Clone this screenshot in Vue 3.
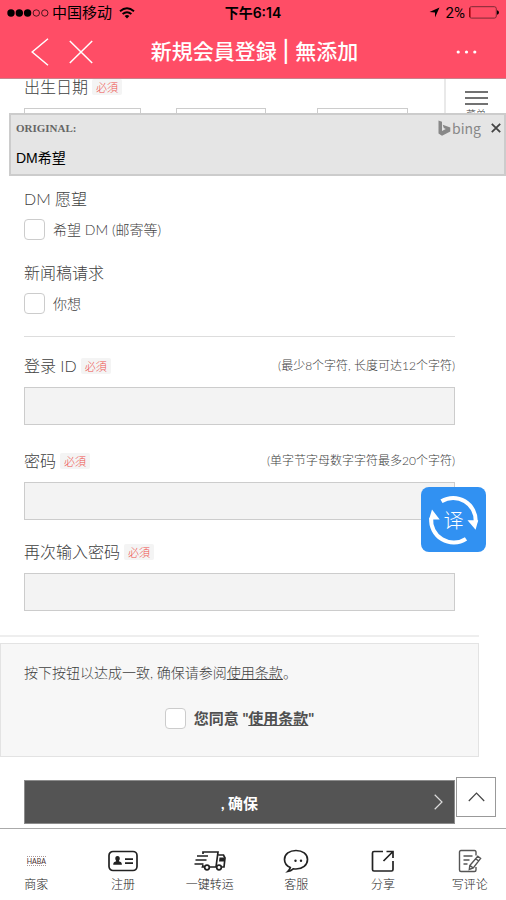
<script setup>
import { ref } from 'vue'

const fields = [
  { id: 'login', label: '登录 ID', hint: '(最少8个字符, 长度可达12个字符)', type: 'text' },
  { id: 'password', label: '密码', hint: '(单字节字母数字字符最多20个字符)', type: 'password' },
  { id: 'confirm', label: '再次输入密码', hint: '', type: 'password' },
]
const tabs = [
  { id: 'shop', label: '商家' },
  { id: 'register', label: '注册' },
  { id: 'ship', label: '一键转运' },
  { id: 'service', label: '客服' },
  { id: 'share', label: '分享' },
  { id: 'review', label: '写评论' },
]
const popupOpen = ref(true)
</script>

<template>
  <div class="page">
    <header class="top">
      <div class="status">
        <div class="carrier">
          <svg width="42" height="10" viewBox="0 0 42 10">
            <circle cx="4" cy="5" r="3.7" /><circle cx="12.3" cy="5" r="3.7" /><circle cx="20.6" cy="5" r="3.7" />
            <g fill="none" stroke="#000" stroke-width=".7"><circle cx="29.3" cy="5" r="3.2" /><circle cx="37.8" cy="5" r="3.2" /></g>
          </svg>
          <span>中国移动</span>
          <svg class="wifi" width="16" height="12" viewBox="0 0 16 12">
            <g fill="none" stroke="#000" stroke-width="1.9"><path d="M1 4.3Q8-1.6 15 4.3" /><path d="M3.6 7.1Q8 3.4 12.4 7.1" /></g>
            <path d="M5.6 9Q8 7.2 10.4 9L8 11.5Z" />
          </svg>
        </div>
        <span class="clock">下午6:14</span>
        <div class="power">
          <svg width="11" height="11" viewBox="0 0 11 11"><path d="M10.5.5 6 10.5V5.4L.5 5Z" /></svg>
          <span>2%</span>
          <svg class="battery" width="30" height="13" viewBox="0 0 30 13">
            <rect x=".5" y=".7" width="26.8" height="11.4" rx="2" fill="none" stroke="#7d2a35" />
            <path d="M.8 2V11" stroke="#a00008" stroke-width="1.5" /><path d="M28 4.2Q30 4.8 30 6.4T28 8.7Z" />
          </svg>
        </div>
      </div>
      <nav class="nav">
        <div class="nav-left">
          <button type="button" aria-label="返回"><svg width="18" height="28" viewBox="0 0 18 28"><path d="M17 .7 1.2 14 17 27.3" /></svg></button>
          <button type="button" aria-label="关闭"><svg width="24" height="24" viewBox="0 0 24 24"><path d="M.8 1 23.2 23M23.2 1 .8 23" /></svg></button>
        </div>
        <h1>新規会員登録 | 無添加</h1>
        <button class="more" type="button" aria-label="更多"><svg width="22" height="4" viewBox="0 0 22 4"><circle cx="2.2" cy="2" r="1.6" /><circle cx="10.5" cy="2" r="1.6" /><circle cx="18.8" cy="2" r="1.6" /></svg></button>
      </nav>
    </header>

    <main>
      <form @submit.prevent>
        <div class="inner">
          <div class="head"><label for="year">出生日期</label><span class="badge">必須</span></div>
          <div class="birth">
            <select id="year" aria-label="年"></select>
            <select aria-label="月"></select>
            <select class="day" aria-label="日"></select>
          </div>
          <div class="group">
            <div class="head">DM 愿望</div>
            <label class="check"><input type="checkbox" /><span>希望 DM (邮寄等)</span></label>
          </div>
          <div class="group">
            <div class="head">新闻稿请求</div>
            <label class="check"><input type="checkbox" /><span>你想</span></label>
          </div>
          <hr />
          <div v-for="f in fields" :key="f.id" class="field">
            <div class="head">
              <label :for="f.id">{{ f.label }}</label><span class="badge">必須</span>
              <small v-if="f.hint">{{ f.hint }}</small>
            </div>
            <input :id="f.id" :type="f.type" />
          </div>
        </div>
        <hr class="thick" />
        <section class="terms">
          <p>按下按钮以达成一致, 确保请参阅<a href="#terms">使用条款</a>。</p>
          <div class="agree">
            <input id="agree" type="checkbox" />
            <label for="agree">您同意 "<a href="#terms">使用条款</a>"</label>
          </div>
        </section>
        <div class="inner">
          <button class="submit" type="submit">
            , 确保
            <svg width="9" height="16" viewBox="0 0 9 16"><path d="m.7.8 7.3 7.2L.7 15.2" /></svg>
          </button>
        </div>
      </form>
    </main>

    <button class="menu" type="button">
      <svg width="23" height="14" viewBox="0 0 23 14"><path d="M0 1h23M0 7h23M0 13h23" /></svg>
      <span>菜单</span>
    </button>

    <aside v-if="popupOpen" class="popup">
      <div class="popup-head">
        <strong>ORIGINAL:</strong>
        <span class="bing">
          <svg width="13" height="16" viewBox="0 0 13 16"><path d="M.5.5 4 1.7v9.2l3.8-2-2-1L4.7 4.8 12.3 7.6v4L4 15.7.5 13.5Z" /></svg>
          <span>bing</span>
        </span>
        <button type="button" aria-label="关闭原文" @click="popupOpen = false"><svg width="10" height="10" viewBox="0 0 10 10"><path d="m.8.8 8.4 8.4M9.2.8.8 9.2" /></svg></button>
      </div>
      <p>DM希望</p>
    </aside>

    <button class="translate" type="button" aria-label="翻译">
      <svg width="65" height="65" viewBox="0 0 65 65">
        <g fill="none" stroke="#fff" stroke-width="4"><path d="M20.5 14.2A22.5 22.5 0 0 1 54.6 35" /><path d="M45 51.8A22.5 22.5 0 0 1 10.2 31" /></g>
        <path d="M46.5 33.2h10.7l-2.6 9.5ZM8 32.5l3-10 7.7 10Z" fill="#fff" />
      </svg>
      <span>译</span>
    </button>

    <button class="to-top" type="button" aria-label="返回顶部">
      <svg width="17" height="10" viewBox="0 0 17 10"><path d="m.8 9 7.7-8 7.7 8" /></svg>
    </button>

    <footer>
      <nav class="tabs">
        <a v-for="t in tabs" :key="t.id" :href="'#' + t.id">
          <span v-if="t.id === 'shop'" class="haba">HABA</span>
          <svg v-else-if="t.id === 'register'" width="30" height="24" viewBox="0 0 30 24">
            <rect x="1" y="2.5" width="28" height="19" rx="4" /><path d="M17 10.2h8M17 14.2h8" />
            <path d="M9.5 7c1.7 0 2.4 1.2 2.3 2.8 0 1-.8 1.7-.9 2.5 1.8.7 3 1 3 3.5H5.2c0-2.5 1.2-2.8 3-3.5-.1-.8-.9-1.5-.9-2.5C7.2 8.200 7.800 7 9.500 7Z" class="solid" />
          </svg>
          <svg v-else-if="t.id === 'ship'" width="32" height="24" viewBox="0 0 32 24">
            <path d="M9 5V3h15l-2 15h-6M10.500 18H8.500l.6-2M24.500 6h5l1.500 3-1 9h-2M3 7h11M1.500 11h11M.5 15h9" />
            <circle cx="13" cy="18.500" r="2.300" /><circle cx="25" cy="18.500" r="2.300" /><path d="M25.500 8.500h5l-.5 4h-5Z" class="solid" />
          </svg>
          <svg v-else-if="t.id === 'service'" width="26" height="24" viewBox="0 0 26 24">
            <path d="M7.300 18.500C3.500 16.800 1.500 14 1.500 10.500 1.500 5 6.500 1.500 13 1.500S24.500 5 24.500 10.500 19.500 20 13 20c-1 0-1.900-.1-2.800-.2C8.600 21.300 7 22.200 4.700 22.500 6.300 21 7 20 7.300 18.500Z" />
            <circle cx="12.500" cy="11.700" r="1.200" class="solid" /><circle cx="18" cy="11.700" r="1.200" class="solid" />
          </svg>
          <svg v-else-if="t.id === 'share'" width="24" height="24" viewBox="0 0 24 24">
            <path d="M12 2.500H3Q1.500 2.500 1.500 4v16.500Q1.500 22 3 22h17.500q1.500 0 1.500-1.500V12M15.500 2.500H22V9M22 2.500 12.500 12" />
          </svg>
          <svg v-else class="thin" width="24" height="24" viewBox="0 0 24 24">
            <path d="M18 6.500V3q0-1.500-1.500-1.500H3Q1.500 1.500 1.500 3v18q0 1.500 1.500 1.500h13.500q1.500 0 1.500-1.500v-3M5.500 7h9M5.500 11h6M5.500 15h4M19.800 7.200l2.800 2.200-7.300 9.500-4 1.600.5-4Zm-2 2.600 2.800 2.200M12 16.500l3 2.300" />
          </svg>
          <span>{{ t.label }}</span>
        </a>
      </nav>
    </footer>
  </div>
</template>

<style>
body {
  margin: 0;
}
</style>

<style scoped>
* {
  box-sizing: border-box;
}
.page {
  position: relative;
  display: flex;
  flex-direction: column;
  min-height: 100vh;
  overflow: hidden;
  background: #fff;
  color: #404040;
  font-family: Lato, "Noto Sans CJK SC", sans-serif;
  font-size: 14px;
  font-weight: 300;
}
button {
  padding: 0;
  border: 0;
  background: none;
  font: inherit;
  color: inherit;
}
svg {
  display: block;
  flex: none;
}
.top {
  position: relative;
  z-index: 2;
  background: #ff4d66;
  border-bottom: 1px solid #c9828c;
}
.status {
  display: grid;
  grid-template-columns: 1fr auto 1fr;
  align-items: center;
  height: 25px;
  padding: 0 7px;
  color: #000;
  font-family: Inter, "Noto Sans CJK SC", sans-serif;
  font-size: 15px;
  font-weight: 400;
  line-height: 24px;
}
.carrier,
.power {
  display: flex;
  align-items: center;
}
.carrier {
  gap: 3px;
}
.wifi {
  margin-left: 4px;
}
.power {
  justify-content: flex-end;
  gap: 6px;
  font-family: Roboto, sans-serif;
}
.battery {
  margin-left: -2px;
}
.clock {
  font-size: 14px;
  font-weight: 600;
}
.nav {
  display: grid;
  grid-template-columns: 1fr auto 1fr;
  align-items: center;
  height: 53px;
  padding: 0 28px 0 31px;
  color: #fff;
}
.nav-left {
  display: flex;
  align-items: center;
  gap: 20px;
}
.nav-left svg {
  fill: none;
  stroke: #fff;
  stroke-width: 1.5;
}
.nav h1 {
  margin: 0;
  font-family: Inter, "Noto Sans CJK JP", sans-serif;
  font-size: 21px;
  font-weight: 500;
  line-height: 30px;
}
.more {
  justify-self: end;
}
.more svg {
  fill: #fff;
}
main {
  margin: -4px 27px 0 0;
}
.inner {
  padding: 0 24px;
}
.head {
  display: flex;
  align-items: center;
  gap: 4px;
  height: 24px;
  font-size: 16px;
  line-height: 24px;
  white-space: nowrap;
}
.badge {
  padding: 0 4px;
  border-radius: 2px;
  background: #f4f4f4;
  color: #ee504c;
  font-family: "Noto Sans CJK JP", sans-serif;
  font-size: 11px;
  line-height: 16px;
}
.head small {
  margin-left: auto;
  font-size: 12px;
}
.birth {
  display: grid;
  grid-template-columns: 117fr 91fr 107fr;
  column-gap: 35px;
  margin: 9px 47px 41px 0;
}
.birth select {
  appearance: none;
  height: 38px;
  border: 1px solid #ccc;
  border-radius: 0;
  background: #fff;
}
.birth .day {
  margin-left: 16px;
}
.group {
  margin-bottom: 21px;
}
.check,
.agree {
  display: flex;
  align-items: center;
  gap: 8px;
  line-height: 21px;
}
.check {
  margin-top: 8px;
}
input[type="checkbox"] {
  appearance: none;
  width: 21px;
  height: 21px;
  margin: 0;
  border: 1px solid #ccc;
  border-radius: 4px;
  background: #fff;
}
hr {
  height: 1px;
  margin: 22px 0 17px;
  border: 0;
  background: #ddd;
}
.field {
  margin-bottom: 20px;
}
hr + .field {
  margin-bottom: 24px;
}
.field > input {
  display: block;
  width: 100%;
  height: 38px;
  margin-top: 9px;
  padding: 0 8px;
  border: 1px solid #ccc;
  border-radius: 0;
  background: #f3f3f3;
  font: inherit;
}
.thick {
  height: 2px;
  margin: 24px 0 6px;
  background: #eee;
}
.terms {
  padding: 17px 23px 27px;
  border: 1px solid #e3e3e3;
  background: #f7f7f7;
}
.terms p {
  margin: 0 0 23px;
  line-height: 24px;
}
a {
  color: inherit;
}
.agree {
  justify-content: center;
  color: #505050;
  font-size: 15px;
  font-weight: 700;
}
.submit {
  position: relative;
  display: flex;
  align-items: center;
  justify-content: center;
  width: 100%;
  height: 44px;
  margin: 23px 0 4px;
  border: 1px solid #8c8c8c;
  background: #545454;
  color: #fff;
  font-size: 15px;
  font-weight: 700;
}
.submit svg {
  position: absolute;
  right: 11px;
  fill: none;
  stroke: #ddd;
  stroke-width: 1.2;
}
.menu {
  position: absolute;
  top: 79px;
  right: 0;
  display: flex;
  flex-direction: column;
  align-items: center;
  gap: 3px;
  width: 62px;
  height: 62px;
  padding-top: 12px;
  border: 1px solid #e9e9e9;
  border-width: 0 0 1px 2px;
  background: #fff;
  font-size: 10px;
  line-height: 12px;
}
.menu svg {
  stroke: #444;
  stroke-width: 1.3;
}
.popup {
  position: absolute;
  top: 113px;
  right: 0;
  left: 9px;
  padding: 2px 3px 5px 5px;
  border: 2px solid #ccc;
  background: #e5e5e5;
  color: #000;
  font-family: "Liberation Sans", "Noto Sans CJK SC", sans-serif;
  font-weight: 400;
}
.popup-head {
  display: flex;
  align-items: center;
  height: 22px;
}
.popup-head strong {
  margin-right: auto;
  color: #666;
  font-family: "Liberation Serif", serif;
  font-size: 11px;
}
.bing {
  display: flex;
  align-items: center;
  gap: 1px;
  margin-right: 10px;
  color: #888;
  font-family: "Noto Sans CJK SC", sans-serif;
  font-size: 14px;
  line-height: 16px;
}
.bing svg {
  fill: #888;
}
.popup-head button svg {
  stroke: #444;
  stroke-width: 1.8;
}
.popup p {
  margin: 9px 0 0;
  line-height: 21px;
}
.translate {
  position: absolute;
  top: 487px;
  right: 20px;
  display: grid;
  place-items: center;
  border-radius: 8px;
  background: #3191f2;
  color: #fff;
}
.translate > * {
  grid-area: 1 / 1;
}
.translate span {
  font-size: 20px;
}
.to-top {
  position: absolute;
  right: 10px;
  bottom: 83px;
  display: grid;
  place-items: center;
  width: 40px;
  height: 40px;
  border: 1px solid #999;
  background: #fff;
}
.to-top svg {
  fill: none;
  stroke: #444;
  stroke-width: 1.2;
}
footer {
  margin-top: auto;
  border-top: 1px solid #aaa;
  background: #fff;
}
.tabs {
  display: grid;
  grid-template-columns: repeat(6, 1fr);
  height: 71px;
  margin: 0 -7px;
  padding-top: 20px;
  color: #222;
  font-size: 12px;
  line-height: 18px;
}
.tabs a {
  display: flex;
  flex-direction: column;
  align-items: center;
  gap: 3px;
  text-decoration: none;
}
.tabs svg {
  fill: none;
  stroke: #222;
  stroke-width: 1.7;
}
.tabs .thin {
  stroke: #555;
  stroke-width: 1.4;
}
.tabs .solid {
  fill: #222;
  stroke: none;
}
.haba {
  height: 10px;
  margin: 7px 0;
  border-top: 1px dotted #a99;
  border-bottom: 1px dotted #a99;
  color: #4a3030;
  font-size: 7px;
  font-weight: 400;
  line-height: 8px;
}
</style>
